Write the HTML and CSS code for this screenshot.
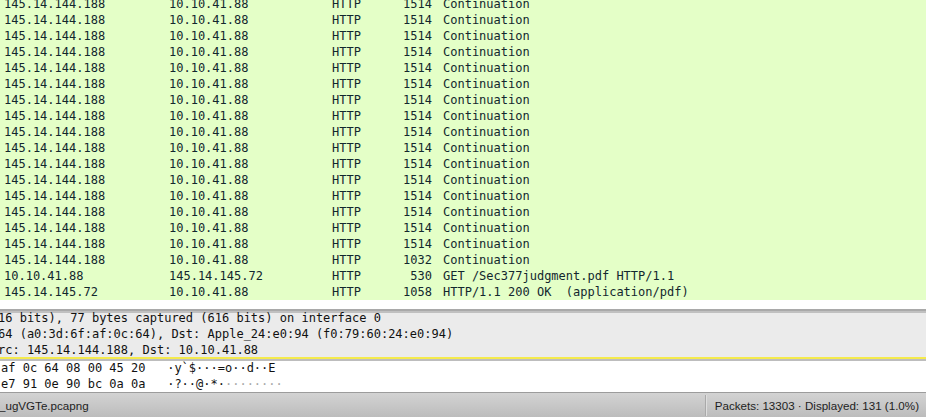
FILE: index.html
```html
<!DOCTYPE html>
<html>
<head>
<meta charset="utf-8">
<link rel="stylesheet" href="styles.css">
</head>
<body>
<div class="app">
  <div class="packet-list">
    <div class="rows">
      <div class="row"><span>145.14.144.188</span><span>10.10.41.88</span><span>HTTP</span><span class="len">1514</span><span class="info">Continuation</span></div>
      <div class="row"><span>145.14.144.188</span><span>10.10.41.88</span><span>HTTP</span><span class="len">1514</span><span class="info">Continuation</span></div>
      <div class="row"><span>145.14.144.188</span><span>10.10.41.88</span><span>HTTP</span><span class="len">1514</span><span class="info">Continuation</span></div>
      <div class="row"><span>145.14.144.188</span><span>10.10.41.88</span><span>HTTP</span><span class="len">1514</span><span class="info">Continuation</span></div>
      <div class="row"><span>145.14.144.188</span><span>10.10.41.88</span><span>HTTP</span><span class="len">1514</span><span class="info">Continuation</span></div>
      <div class="row"><span>145.14.144.188</span><span>10.10.41.88</span><span>HTTP</span><span class="len">1514</span><span class="info">Continuation</span></div>
      <div class="row"><span>145.14.144.188</span><span>10.10.41.88</span><span>HTTP</span><span class="len">1514</span><span class="info">Continuation</span></div>
      <div class="row"><span>145.14.144.188</span><span>10.10.41.88</span><span>HTTP</span><span class="len">1514</span><span class="info">Continuation</span></div>
      <div class="row"><span>145.14.144.188</span><span>10.10.41.88</span><span>HTTP</span><span class="len">1514</span><span class="info">Continuation</span></div>
      <div class="row"><span>145.14.144.188</span><span>10.10.41.88</span><span>HTTP</span><span class="len">1514</span><span class="info">Continuation</span></div>
      <div class="row"><span>145.14.144.188</span><span>10.10.41.88</span><span>HTTP</span><span class="len">1514</span><span class="info">Continuation</span></div>
      <div class="row"><span>145.14.144.188</span><span>10.10.41.88</span><span>HTTP</span><span class="len">1514</span><span class="info">Continuation</span></div>
      <div class="row"><span>145.14.144.188</span><span>10.10.41.88</span><span>HTTP</span><span class="len">1514</span><span class="info">Continuation</span></div>
      <div class="row"><span>145.14.144.188</span><span>10.10.41.88</span><span>HTTP</span><span class="len">1514</span><span class="info">Continuation</span></div>
      <div class="row"><span>145.14.144.188</span><span>10.10.41.88</span><span>HTTP</span><span class="len">1514</span><span class="info">Continuation</span></div>
      <div class="row"><span>145.14.144.188</span><span>10.10.41.88</span><span>HTTP</span><span class="len">1514</span><span class="info">Continuation</span></div>
      <div class="row"><span>145.14.144.188</span><span>10.10.41.88</span><span>HTTP</span><span class="len">1032</span><span class="info">Continuation</span></div>
      <div class="row"><span>10.10.41.88</span><span>145.14.145.72</span><span>HTTP</span><span class="len">530</span><span class="info">GET /Sec377judgment.pdf HTTP/1.1</span></div>
      <div class="row"><span>145.14.145.72</span><span>10.10.41.88</span><span>HTTP</span><span class="len">1058</span><span class="info">HTTP/1.1 200 OK  (application/pdf)</span></div>
    </div>
  </div>

  <div class="details">
    <div class="details-lines">
      <div class="line">16 bits), 77 bytes captured (616 bits) on interface 0</div>
      <div class="line">64 (a0:3d:6f:af:0c:64), Dst: Apple_24:e0:94 (f0:79:60:24:e0:94)</div>
      <div class="line">rc: 145.14.144.188, Dst: 10.10.41.88</div>
    </div>
  </div>

  <div class="hex">
    <div class="hex-lines">
      <div class="line">af 0c 64 08 00 45 20   ·y`$···=o··d··E</div>
      <div class="line">e7 91 0e 90 bc 0a 0a   ·?··@·*·<span class="faint">········</span></div>
    </div>
  </div>

  <div class="status">
    <span class="file">_ugVGTe.pcapng</span>
    <span class="stats">Packets: 13303 · Displayed: 131 (1.0%)</span>
  </div>
</div>
</body>
</html>
```

FILE: styles.css
```css
html, body {
  margin: 0;
  padding: 0;
  width: 926px;
  height: 417px;
  overflow: hidden;
  background: #ffffff;
}

.app {
  display: flex;
  flex-direction: column;
  width: 926px;
  height: 417px;
  font-family: "DejaVu Sans Mono", "Liberation Mono", monospace;
  font-size: 12px;
}

.packet-list {
  height: 309px;
  flex: none;
  overflow: hidden;
  background: #ffffff;
}

.rows {
  margin-top: -4px;
  background: #e4ffc7;
  color: #12272e;
}

.row {
  display: grid;
  grid-template-columns: 165px 163px 56px 44px 1fr;
  padding-left: 4px;
  height: 16px;
  line-height: 16px;
  white-space: pre;
}

.row .len {
  text-align: right;
}

.row .info {
  padding-left: 11px;
}

.details {
  height: 46px;
  flex: none;
  overflow: hidden;
  background: #ebebeb;
  border-top: 2px solid #a9a9a9;
  border-bottom: 2px solid #f4ea4c;
  box-shadow: inset 0 2px 0 #c0c0c0;
  color: #111111;
}

.details-lines {
  margin-top: -1px;
  margin-left: -2px;
}

.line {
  height: 16px;
  line-height: 16px;
  white-space: pre;
}

.hex {
  height: 31px;
  flex: none;
  overflow: hidden;
  background: #ffffff;
  border-top: 2px solid #bdbdbd;
  color: #111111;
}

.hex-lines {
  margin-top: -1px;
  padding-left: 1px;
}

.faint {
  color: #a8a8a8;
}

.status {
  flex: 1;
  display: flex;
  align-items: center;
  border-top: 1px solid #9c9c9c;
  background: linear-gradient(#d3d3d3, #bcbcbc);
  font-family: "Liberation Sans", Arial, sans-serif;
  font-size: 11.6px;
  color: #1e1e1e;
}

.file {
  flex: 1;
  margin-left: -1px;
}

.stats {
  border-left: 1px solid #a9a9a9;
  box-shadow: inset 1px 0 0 #dedede;
  padding-left: 9px;
  padding-right: 7px;
  align-self: stretch;
  display: flex;
  align-items: center;
  margin: 2px 0 1px;
}
```
